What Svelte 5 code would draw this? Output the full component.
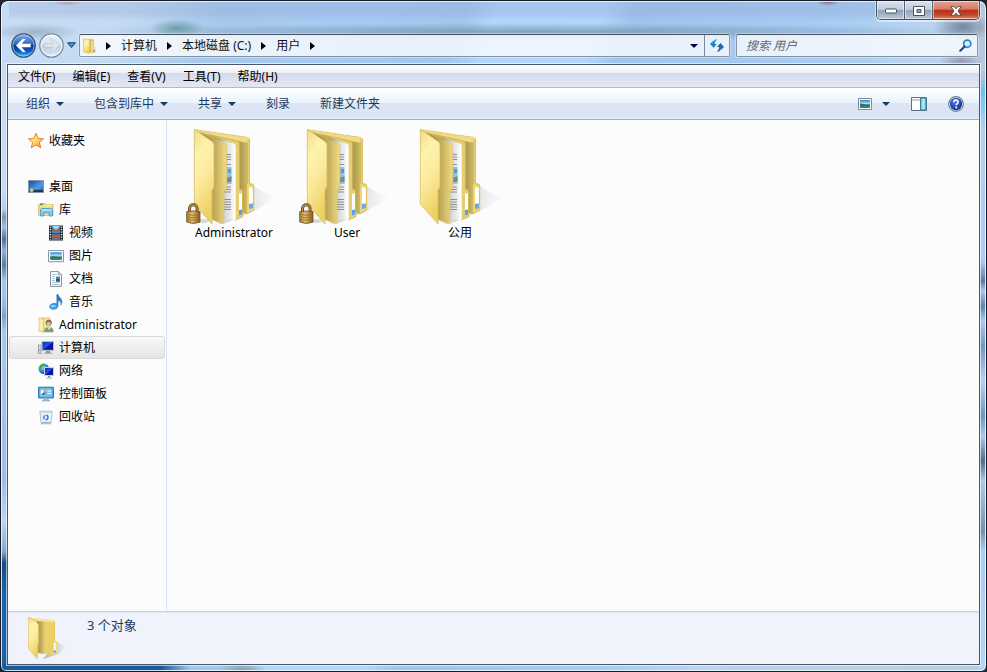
<script>
  const menus = ['文件(F)', '编辑(E)', '查看(V)', '工具(T)', '帮助(H)'];
  const crumbs = ['计算机', '本地磁盘 (C:)', '用户'];
  const commands = [
    { label: '组织', drop: true },
    { label: '包含到库中', drop: true },
    { label: '共享', drop: true },
    { label: '刻录' },
    { label: '新建文件夹' }
  ];
  const tree = [
    { label: '收藏夹', icon: 'star', level: 0, section: true },
    { label: '桌面', icon: 'desktop', level: 0 },
    { label: '库', icon: 'library', level: 1 },
    { label: '视频', icon: 'video', level: 2 },
    { label: '图片', icon: 'picture', level: 2 },
    { label: '文档', icon: 'document', level: 2 },
    { label: '音乐', icon: 'music', level: 2 },
    { label: 'Administrator', icon: 'user', level: 1 },
    { label: '计算机', icon: 'computer', level: 1 },
    { label: '网络', icon: 'network', level: 1 },
    { label: '控制面板', icon: 'control', level: 1 },
    { label: '回收站', icon: 'bin', level: 1 }
  ];
  const folders = [
    { name: 'Administrator', locked: true },
    { name: 'User', locked: true },
    { name: '公用', locked: false }
  ];
  let selected = $state(8);
  let query = $state('');
</script>

<svg class="defs" width="0" height="0" aria-hidden="true">
  <defs>
    <linearGradient id="gFront" x1="0" y1="0" x2="0.3" y2="1">
      <stop offset="0" stop-color="#efdb86" /><stop offset=".3" stop-color="#fdf3ae" /><stop offset=".6" stop-color="#fbea9c" /><stop offset="1" stop-color="#efd062" />
    </linearGradient>
    <linearGradient id="gMid" x1="0" y1="0" x2="1" y2="0">
      <stop offset="0" stop-color="#a08b42" /><stop offset=".45" stop-color="#b7a04f" /><stop offset="1" stop-color="#f0dc84" />
    </linearGradient>
    <linearGradient id="gBack" x1="0" y1="0" x2="1" y2="0">
      <stop offset="0" stop-color="#c8b35f" /><stop offset=".75" stop-color="#a89448" /><stop offset="1" stop-color="#efd97d" />
    </linearGradient>
    <linearGradient id="gPaper" x1="0" y1="0" x2="1" y2="0">
      <stop offset=".1" stop-color="#8f8f90" /><stop offset=".45" stop-color="#d2d2d4" /><stop offset="1" stop-color="#fff" />
    </linearGradient>
    <linearGradient id="gShadow" x1="0" y1="0" x2="1" y2="0">
      <stop offset="0" stop-color="#8a8a8a" stop-opacity=".6" /><stop offset=".6" stop-color="#aaa" stop-opacity=".45" /><stop offset="1" stop-color="#ccc" stop-opacity=".1" />
    </linearGradient>
    <linearGradient id="gLock" x1="0" y1="0" x2="1" y2="0">
      <stop offset="0" stop-color="#a9803a" /><stop offset=".4" stop-color="#e0bd6b" /><stop offset="1" stop-color="#8a6020" />
    </linearGradient>
    <linearGradient id="gSky" x1="0" y1="0" x2="0" y2="1">
      <stop offset="0" stop-color="#2f83cc" /><stop offset=".5" stop-color="#bfe9f7" /><stop offset=".6" stop-color="#3b8f7c" /><stop offset="1" stop-color="#2f77a4" />
    </linearGradient>
    <linearGradient id="gScreen" x1="0" y1="0" x2="1" y2="1">
      <stop offset="0" stop-color="#0d1f9c" /><stop offset=".48" stop-color="#2257e0" /><stop offset=".52" stop-color="#0718a8" /><stop offset="1" stop-color="#0a1690" />
    </linearGradient>
    <linearGradient id="gDesk" x1="0" y1="0" x2="1" y2="1">
      <stop offset="0" stop-color="#14459c" /><stop offset=".6" stop-color="#4f9be4" /><stop offset="1" stop-color="#2763b8" />
    </linearGradient>
    <linearGradient id="gStar" x1="0" y1="0" x2="1" y2="1">
      <stop offset="0" stop-color="#ffa82c" /><stop offset=".4" stop-color="#ffe680" /><stop offset="1" stop-color="#f28a1c" />
    </linearGradient>
    <linearGradient id="gNote" x1="0" y1="0" x2="0" y2="1">
      <stop offset="0" stop-color="#1b62b8" /><stop offset="1" stop-color="#3fa9ea" />
    </linearGradient>
    <linearGradient id="gBall" x1="0" y1="0" x2="0" y2="1">
      <stop offset="0" stop-color="#8fb6e8" /><stop offset=".45" stop-color="#2a62bd" /><stop offset=".5" stop-color="#0b3a98" /><stop offset=".75" stop-color="#0f58bf" /><stop offset="1" stop-color="#45d3fb" />
    </linearGradient>
    <linearGradient id="gPale" x1="0" y1="0" x2="0" y2="1">
      <stop offset="0" stop-color="#eef4fa" /><stop offset=".48" stop-color="#d3dfeb" /><stop offset=".52" stop-color="#bccddd" /><stop offset="1" stop-color="#e2edf6" />
    </linearGradient>
    <linearGradient id="gRefresh" x1="0" y1="0" x2="0" y2="1">
      <stop offset="0" stop-color="#2cb4dd" /><stop offset="1" stop-color="#2468b4" />
    </linearGradient>
    <radialGradient id="gGlobe" cx=".35" cy=".3" r=".8">
      <stop offset="0" stop-color="#bdeaff" /><stop offset=".5" stop-color="#2f8fe0" /><stop offset="1" stop-color="#0d3d94" />
    </radialGradient>
    <radialGradient id="gHelp" cx=".4" cy=".3" r=".8">
      <stop offset="0" stop-color="#4c7fe8" /><stop offset="1" stop-color="#0a248e" />
    </radialGradient>
  </defs>
</svg>

{#snippet smallFolder()}
  <svg width="16" height="16" viewBox="0 0 16 16" aria-hidden="true">
    <path d="M6 1.200l5.500.6v12.600H6z" fill="#d9bd5c" stroke="#dcb957" stroke-width=".6" />
    <path d="M9 3h2v11H9z" fill="#f1dc86" />
    <path d="M1.500.8L7.500 2v13.500L1.500 14z" fill="url(#gFront)" stroke="#dcbc5c" stroke-width=".6" />
    <path d="M11 9h2v5.500h-2z" fill="#f7f1d8" stroke="#d9b959" stroke-width=".5" />
    <path d="M11.400 11.500h1.400v2.400h-1.400z" fill="#4c9df0" />
  </svg>
{/snippet}

{#snippet treeIcon(name)}
  <svg width="16" height="16" viewBox="0 0 16 16" aria-hidden="true">
    {#if name === 'star'}
      <path d="M8 .4l2.200 5 5.300.4-4.200 3.500 1.500 5.500L8 11.900l-4.800 2.900 1.500-5.500L.5 5.800l5.300-.4z" fill="url(#gStar)" stroke="#e07c28" stroke-width=".9" stroke-linejoin="round" />
    {:else if name === 'desktop'}
      <path d="M.5 1.500h15v12H.5z" fill="url(#gDesk)" stroke="#8795a8" />
      <path d="M1 10.800h14V13H1z" fill="#25374b" />
      <circle cx="3.600" cy="11.200" r="1.900" fill="#6fd2f2" /><path d="M3.600 9.500v3.400M1.900 11.200h3.400" stroke="#f0c02e" stroke-width=".8" />
    {:else if name === 'library'}
      <path d="M.6 3L2 1.500h4.800l1.200 1h7v10.800H.6z" fill="#f3de8a" stroke="#d0ad4e" stroke-width=".8" />
      <path d="M2 2.400h3" stroke="#3ea64d" stroke-width="1.400" /><path d="M8 3.200h6" stroke="#fff8cf" />
      <path d="M2.500 8l1-1.500h10l1 1.500v6h-3.300v-3.300H5.800V14H2.500z" fill="#7fcaf2" stroke="#4192c7" stroke-width=".8" /><path d="M3.500 7.900h10" stroke="#d9f5ff" />
    {:else if name === 'video'}
      <path d="M1 .5h14v15H1z" fill="#222b33" /><path d="M4 1h8v14H4z" fill="#377db2" />
      <path d="M4 1h8L9 5l3 3H4l3-3z" fill="#9edaf0" /><path d="M5 3l3 2 3-2-1 4H6zM4 10l4 1 4-2v3l-3 2-5-1z" fill="#b5583c" /><path d="M4 8h8" stroke="#20303c" />
      <path d="M2.500 1.500v13M13.500 1.500v13" stroke="#e9eef2" stroke-width="1.500" stroke-dasharray="1.200 1.300" />
    {:else if name === 'picture'}
      <path d="M.5 2.500h15v11.200H.5z" fill="#fff" stroke="#8a97a3" /><path d="M2.200 4.200h11.600v7.800H2.200z" fill="url(#gSky)" /><path d="M2.200 8.800c2-1.600 5 .4 11.600 0v1.400H2.200z" fill="#2a7851" />
    {:else if name === 'document'}
      <path d="M2.500.6h8l3 3v11.800h-11z" fill="#fff" stroke="#84909b" /><path d="M10.300.8v3h3" fill="#dce3ea" stroke="#84909b" stroke-width=".8" />
      <path d="M4 3.500h5M4 5.500h3M4 7.500h3M4 9.500h3M4 11.500h8M4 13.500h8" stroke="#9fb0c0" stroke-width=".8" /><path d="M8 5.500h4v5H8z" fill="#3a8bd2" /><path d="M8 8.500l2-1.200 2 1.700v1.500H8z" fill="#2c5b53" />
    {:else if name === 'music'}
      <path d="M8.800.4h1.300c.4 3 4.600 3.800 3.800 8.600-.1 1-.5 1.700-1.100 2.300.5-2.500-.4-4.300-2.600-4.800v5.300c0 2.200-2 3.700-4.700 3.700-2.300 0-4-1.100-4-2.700 0-2 2.400-3.500 5-3.500.9 0 1.600.1 2.300.4z" fill="url(#gNote)" stroke="#2472b8" stroke-width=".4" /><ellipse cx="5.200" cy="12" rx="2.600" ry="1.300" fill="#7fd2f7" />
    {:else if name === 'user'}
      <path d="M1 1l5-.5V15l-5-1z" fill="#dfc265" /><path d="M5 1h7v13.500H5z" fill="#f4e19a" stroke="#cfae52" stroke-width=".6" /><path d="M1 .6L5.400 2v13.400L1 14z" fill="#fbefae" stroke="#d7b75c" stroke-width=".6" />
      <circle cx="10.800" cy="5.800" r="3" fill="#7a6a5a" /><circle cx="10.800" cy="6.900" r="2.100" fill="#e0b593" /><path d="M6 15.300c0-3.600 2-5.300 5-5.300s4.600 1.700 4.600 5.300z" fill="#7c9f74" /><path d="M9 10.300l2 2.500 2-2.500z" fill="#e7edf2" />
    {:else if name === 'computer'}
      <path d="M.5 5h2.600v8.500H.5z" fill="#dce0e3" stroke="#858c92" stroke-width=".8" /><path d="M1.100 10h1.400" stroke="#3bb14a" /><path d="M4 1.500h11.500v8.800H4z" fill="url(#gScreen)" stroke="#b6bec8" /><path d="M8 11h4l.8 2H7.200z" fill="#8f99a5" /><path d="M5.500 13.500h9" stroke="#aab3bd" />
    {:else if name === 'network'}
      <circle cx="5.800" cy="5.800" r="5.300" fill="url(#gGlobe)" /><path d="M2 2.500c2-2 4-2 5-1.300L6 3.500 4 4 3.500 7 1 6zM6 6l3-2 1.500 2-3 4.500L5 8z" fill="#43ad42" />
      <path d="M6.500 4.500h9v8h-9z" fill="url(#gScreen)" stroke="#cbd3dc" /><path d="M10 13h2v1.400h-2z" fill="#7c8894" /><path d="M8 15h6" stroke="#a1abb7" />
    {:else if name === 'control'}
      <path d="M.6 1.200h14.800v10.800H.6z" fill="#57aee2" stroke="#2d78ae" /><path d="M2 2.700h12v7.900H2z" fill="#7cc3ec" /><circle cx="5.400" cy="6.500" r="2.700" fill="#fff" /><path d="M5.400 6.500V3.800a2.700 2.700 0 012.700 2.700z" fill="#f19e2e" /><path d="M5.400 6.500h2.700a2.700 2.700 0 01-4.700 1.700z" fill="#2476b8" />
      <path d="M9.500 5h3.500M9.500 7.500h3.500" stroke="#fff" stroke-width="1.200" /><path d="M6 12.500h4l1 1.800H5z" fill="#a9b7c4" /><path d="M4 14.800h8" stroke="#8797a6" />
    {:else}
      <path d="M1.800 2.200h12.400l-1.400 12.600H3.200z" fill="#e7f0f6" stroke="#a5b3bf" stroke-width=".8" /><path d="M1.800 2.200h12.400l-.2 1.600H2z" fill="#c4d0da" /><path d="M12.300 4.500l-1 9.500" stroke="#fff" /><path d="M3.600 13.800h8.900" stroke="#8d99a5" />
      <circle cx="7.900" cy="8.400" r="2.100" fill="none" stroke="#3184db" stroke-width="1.500" stroke-dasharray="3.400 1" />
    {/if}
  </svg>
{/snippet}

<div class="window">
  <div class="titlebar">
    <div class="caption">
      <button class="cap" aria-label="最小化"><svg width="12" height="6" viewBox="0 0 12 6"><rect x=".5" y="1" width="11" height="4" rx=".5" fill="#fff" stroke="#4a5460" /></svg></button>
      <button class="cap" aria-label="最大化"><svg width="12" height="10" viewBox="0 0 12 10"><path d="M.5.500h11v9H.5zM4 3.500v3h4v-3z" fill="#fff" fill-rule="evenodd" stroke="#4a5460" /></svg></button>
      <button class="cap close" aria-label="关闭"><svg width="12" height="10" viewBox="0 0 12 10"><path d="M.8.600h3.300L6 2.800 7.900.6h3.300L8 5l3.200 4.400H7.900L6 7.200 4.100 9.400H.8L4 5z" fill="#fff" stroke="#5b4444" stroke-width=".9" /></svg></button>
    </div>
  </div>

  <nav class="navrow">
    <button class="plain" aria-label="后退">
      <svg width="25" height="25" viewBox="0 0 25 25"><circle cx="12.500" cy="12.500" r="11.700" fill="url(#gBall)" stroke="#33506f" stroke-width="1.200" /><circle cx="12.500" cy="12.500" r="10.600" fill="none" stroke="#bfe0fa" stroke-opacity=".6" /><path d="M5 12.500l6.500-6.500h3.200l-4 4.700h9v3.600h-9l4 4.700h-3.200z" fill="#fff" /></svg>
    </button>
    <button class="plain" aria-label="前进">
      <svg width="25" height="25" viewBox="0 0 25 25"><circle cx="12.500" cy="12.500" r="11.700" fill="url(#gPale)" stroke="#71879e" stroke-width="1.200" /><circle cx="12.500" cy="12.500" r="10.500" fill="none" stroke="#fff" stroke-opacity=".8" /><path d="M20 12.500L13.500 6h-3.200l4 4.700h-9v3.600h9l-4 4.700h3.200z" fill="#dce6ee" stroke="#adbdcc" stroke-width=".5" /></svg>
    </button>
    <button class="plain" aria-label="最近的页面"><svg width="9" height="7" viewBox="0 0 9 7"><path d="M.6.800h7.800L4.500 5.600z" fill="#3a9edc" stroke="#123c66" /></svg></button>
    <div class="address">
      {@render smallFolder()}
      <svg class="sep first" width="5" height="8" viewBox="0 0 5 8" aria-hidden="true"><path d="M0 0l5 4-5 4z" /></svg>
      {#each crumbs as crumb}
        <button class="crumb">{crumb}</button>
        <svg class="sep" width="5" height="8" viewBox="0 0 5 8" aria-hidden="true"><path d="M0 0l5 4-5 4z" /></svg>
      {/each}
      <span class="grow"></span>
      <button class="history" aria-label="以前的位置"><svg width="8" height="4" viewBox="0 0 8 4"><path d="M0 0h8L4 4z" fill="#00004a" /></svg></button>
      <button class="refresh" aria-label="刷新">
        <svg width="14" height="13" viewBox="0 0 14 13"><path d="M0 5L3.300 1.600v1.900C3.300 1.500 4.300.3 6.400 0v1.600C5.300 2 5 3.200 5 5h1.800L3.700 8.700z" fill="url(#gRefresh)" /><path d="M14 8l-3.300 3.200V9.300c0 2-1 3.300-3.100 3.700v-1.600C8.700 11 9 9.800 9 8H7l3.500-4z" fill="#2468b4" /></svg>
      </button>
    </div>
    <label class="search">
      <input type="text" placeholder="搜索 用户" aria-label="搜索 用户" bind:value={query} />
      <svg width="13" height="13" viewBox="0 0 13 13" aria-hidden="true"><circle cx="8.200" cy="4.700" r="3.600" fill="#d9f0fc" stroke="#2f83c9" stroke-width="1.700" /><path d="M5.600 7.500L1.300 11.700" stroke="#1c4690" stroke-width="2.200" stroke-linecap="round" /></svg>
    </label>
  </nav>

  <div class="client">
    <div class="menubar">
      {#each menus as menu}<button>{menu}</button>{/each}
    </div>
    <div class="toolbar">
      {#each commands as cmd}
        <button>{cmd.label}{#if cmd.drop}<svg width="8" height="4" viewBox="0 0 8 4" aria-hidden="true"><path d="M0 0h8L4 4z" fill="#1e395b" /></svg>{/if}</button>
      {/each}
      <span class="grow"></span>
      <div class="tools">
        <button class="view" aria-label="更改您的视图">
          <svg width="14" height="12" viewBox="0 0 14 12"><path d="M.5.500h13v11H.5z" fill="#fff" stroke="#7e8b99" /><path d="M2 2h10v8H2z" fill="url(#gSky)" /><path d="M2 5.500c3 0 5 1.500 10 1v1.500H2z" fill="#2b7a4b" /></svg>
          <svg width="8" height="4" viewBox="0 0 8 4"><path d="M0 0h8L4 4z" fill="#1e395b" /></svg>
        </button>
        <button aria-label="显示预览窗格"><svg width="16" height="14" viewBox="0 0 16 14"><path d="M.5.500h15v13H.5z" fill="#fff" stroke="#557186" /><path d="M1 3h9" stroke="#8fa2b3" /><path d="M9.500 1H15v12H9.500z" fill="#79cfdf" stroke="#3c7f99" /><path d="M12.500 2v10" stroke="#b9edf5" stroke-width="2" /></svg></button>
        <button class="help" aria-label="获取帮助"><svg width="16" height="16" viewBox="0 0 16 16"><circle cx="8" cy="8" r="7.400" fill="#e9edf2" stroke="#767e88" stroke-width="1.100" /><circle cx="8" cy="8" r="6.200" fill="url(#gHelp)" /><path d="M5.900 6.300c0-3 4.400-2.900 4.300-.3C10.200 7.500 8.200 7.600 8.200 9.200" fill="none" stroke="#fff" stroke-width="1.600" /><circle cx="8.200" cy="11.400" r="1" fill="#fff" /></svg></button>
      </div>
    </div>

    <div class="body">
      <aside>
        {#each tree as item, i}
          <button class="node level{item.level}" class:section={item.section} class:selected={selected === i} onclick={() => (selected = i)}>
            {@render treeIcon(item.icon)}<span>{item.label}</span>
          </button>
        {/each}
      </aside>
      <main>
        {#each folders as folder}
          <button class="tile">
            <svg width="100" height="98" viewBox="0 -1 100 98" aria-hidden="true">
              <path d="M68 58l13 8 10 4.500-8 6-14 8-28 12h-6z" fill="url(#gShadow)" opacity=".6" />
              <path d="M10.500 2.500L63 10.200q2.700.5 2.700 3.300V56l3 .6q1.300.4 1.300 1.600V83.500L63 87l-8-2V22L12 5z" fill="url(#gBack)" />
              <path d="M10.500 2.500L63 10.200q2.700.5 2.700 3.300V16l-10-1.500L14 5z" fill="#f0db85" stroke="#dcc36a" stroke-width=".5" />
              <path d="M65.500 13v44l4.200 1.400V83l-7 4V58l1.200-2.500V13z" fill="#efd878" stroke="#cdb04e" stroke-width=".6" />
              <path d="M65 60.500h3.800V78l-3.800 1.500z" fill="#fff" /><path d="M65 77l3.800-.7V81l-3.800 1.300z" fill="#68a6f2" />
              <path d="M26 8l28 6.500q1.600.6 1.600 2.500V62l2 .6q1.100.5 1.100 1.600V90L51 93V18z" fill="#e6cf72" stroke="#c8ae51" stroke-width=".7" />
              <path d="M55 66.500h3V83l-3 1z" fill="#fff" /><path d="M55 83l3-.5V87.500l-3 1z" fill="#5b9cf0" />
              <path d="M30 11l20 5.500q1.500.6 1.600 2V93L38 92V20z" fill="url(#gPaper)" />
              <path d="M40 27.500h7M40 30h7M40 32.500h7M40 37.500h7M40 60h7M40 62.500h7M40 65h7M40 72.500h7M40 75h7M40 77.500h7M40 80h7M40 82.500h7" stroke="#82868b" stroke-width=".9" />
              <path d="M42 40h5.500v17H42z" fill="#a9bccb" /><path d="M44 42h3v4h-3z" fill="#4aa0d4" /><path d="M43 51l4.500-2v6H43z" fill="#6a8f96" />
              <path d="M50.500 20v72" stroke="#fff" stroke-width="1.500" />
              <path d="M16 5l24 11q2.700 1.300 2.700 3.500V61l-2.500 3-.4 32.500-4-.5L27 92V17z" fill="url(#gMid)" stroke="#d8c06a" stroke-width=".6" />
              <path d="M10.300 2.300L28 14.500q2 1.400 2 3.600V60l-2 3v34L10.300 77z" fill="url(#gFront)" stroke="#d9bd61" stroke-width=".8" />
              {#if folder.locked}
                <ellipse cx="18" cy="94" rx="7" ry="2" fill="#999" opacity=".35" />
                <path d="M5.500 86v-4c0-5.600 7.600-5.600 7.600 0v4" fill="none" stroke="#5e431a" stroke-width="3" /><path d="M5.500 86v-4c0-5.600 7.600-5.600 7.600 0v4" fill="none" stroke="#c19b4c" stroke-width="1.200" />
                <path d="M2.700 84.700q6.800-1.600 13.300 0V95q-6.500 3-13.300 0z" fill="url(#gLock)" stroke="#6c4a18" stroke-width=".8" />
                <path d="M3 87.500q6.500 1.500 12.800 0M3 90q6.500 1.500 12.800 0M3 92.500q6.500 1.500 12.800 0" fill="none" stroke="#8a6428" stroke-width=".7" />
              {/if}
            </svg>
            <span>{folder.name}</span>
          </button>
        {/each}
      </main>
    </div>

    <footer>
      <svg width="40" height="46" viewBox="0 0 40 46" aria-hidden="true">
        <path d="M30 27l9 5-7 7-16 5z" fill="url(#gShadow)" />
        <path d="M2 2.500l25 3q1 .3 1 1.500V26l2 1v11l-4 2-15-2z" fill="#e8cb60" />
        <path d="M10 5l9 1v33l-8-1z" fill="url(#gMid)" opacity=".8" /><path d="M18 5l9 1v33l-9-.5z" fill="#ecd067" /><path d="M2 2.500l25 3v2L10 6z" fill="#f5e59a" />
        <path d="M27 26l3 1v11l-4 2V27z" fill="#f1da7d" /><path d="M27 28h1.500v8H27z" fill="#fff" /><circle cx="27.800" cy="36.500" r="1.300" fill="#5ba3f2" />
        <path d="M1.500 2L10 8q1.500 1 1.500 2.500V29l-1 1.500V44L1.500 34z" fill="url(#gFront)" stroke="#dfc368" stroke-width=".6" />
      </svg>
      <span>3 个对象</span>
    </footer>
  </div>
</div>

<style>
  :global(body) { margin: 0; background: #20242c; }
  .defs { position: absolute; }
  .window, button, input { font-family: 'Noto Sans', 'Noto Sans CJK SC', sans-serif; font-size: 12px; }
  .window {
    box-sizing: border-box;
    display: flex;
    flex-direction: column;
    min-height: 100vh;
    padding: 0 6px 6px;
    border: 1px solid #181a25;
    border-radius: 8px 8px 6px 6px;
    box-shadow: inset 0 0 0 1px rgba(240, 250, 255, .85);
    background:
      radial-gradient(ellipse 28px 9px at 176px 27px, rgba(63, 128, 122, .6), transparent),
      radial-gradient(ellipse 46px 9px at 34px 31px, rgba(100, 118, 140, .4), transparent),
      radial-gradient(ellipse 16px 5px at 66px 0, rgba(190, 80, 90, .5), transparent),
      radial-gradient(ellipse 12px 5px at 827px 0, rgba(120, 50, 80, .7), transparent),
      radial-gradient(ellipse 30px 14px at 962px 26px, rgba(88, 100, 122, .7), transparent),
      radial-gradient(ellipse 22px 12px at 960px 60px, rgba(128, 120, 140, .6), transparent),
      radial-gradient(ellipse 24px 10px at 242px 100%, rgba(125, 145, 130, .8), transparent),
      linear-gradient(to right, #1a5b9c 160px, transparent 190px) 0 100% / 100% 8px no-repeat,
      linear-gradient(#c5daf4 0 190px, #b5cff0 208px, #8099a4 216px, #9dbde6 226px, #566d96 238px, #8db3de 250px, #55809e 264px, #a5c7ef 280px, #9cbfe9 300px, #7fa2cc 315px, #a5c8f0 330px, #9dbdea 480px, #bcd6f2 520px, #88a8d2 550px, #174a80 562px, #1b62a4 590px) 0 0 / 8px 100% no-repeat,
      linear-gradient(#b8c8dd 0 70px, #74bdf2 90px, #b0d3f4 130px, #a9cef4 260px, #587ca7 280px, #a7cbf1 290px, #5c84b1 305px, #a9cef6 320px, #7197c4 345px, #b1d4f6 380px, #6c98be 415px, #a5ccf0 435px, #536c8c 460px, #a7ceef 480px, #7394b4 530px, #a7cff3 550px, #b3d6fa) 100% 0 / 8px 100% no-repeat,
      radial-gradient(ellipse 460px 9px at 530px 31px, rgba(100, 128, 145, .6), transparent),
      linear-gradient(to bottom, rgba(130, 155, 200, .25) 0 12px, transparent 20px),
      linear-gradient(110deg, #c8dcf4 0, #c4daf3 120px, #a8c8ec 210px, #a6cbf3 330px, #a2c7ee 440px, #b1d6fd 470px, #b1d5fc 570px, #a0c5ed 600px, #a8ccf3 800px, #b9d4f0 880px, #bacde2 100%);
  }
  button { padding: 0; border: 0; background: none; color: inherit; line-height: 16px; }
  button:focus-visible { outline: 1px dotted #345; }
  svg { display: block; flex: none; }
  .grow { flex: 1; }
  .titlebar { display: flex; justify-content: flex-end; height: 33px; }
  .caption {
    display: flex;
    height: 18px;
    border: 1px solid #48515e;
    border-top: 0;
    border-radius: 0 0 5px 5px;
    overflow: hidden;
    box-shadow: 0 1px 0 1px rgba(255, 255, 255, .5);
  }
  .cap {
    box-sizing: border-box;
    display: flex;
    align-items: center;
    justify-content: center;
    width: 28px;
    padding-top: 1px;
    border-right: 1px solid #56606e;
    background: linear-gradient(#dbe4ee, #bccada 48%, #91a3b8 52%, #b8c8da);
    box-shadow: inset 0 0 0 1px rgba(255, 255, 255, .5);
  }
  .close {
    width: 46px;
    border-right: 0;
    background: linear-gradient(#e6a493, #d67b67 45%, #b92f19 52%, #c54a2b 80%, #df8f62);
  }
  .navrow { display: flex; align-items: center; gap: 3px; height: 23px; padding: 0 2px 7px 4px; }
  .plain { display: flex; }
  .address, .search {
    box-sizing: border-box;
    display: flex;
    align-items: center;
    height: 23px;
    border: 1px solid #8495a6;
    border-top-color: #46525f;
    border-radius: 2px;
    background: rgba(255, 255, 255, .76);
    box-shadow: 0 0 0 1px rgba(255, 255, 255, .35);
  }
  .address { flex: 1; min-width: 0; padding-left: 2px; }
  .sep { fill: #000; margin: 0 10px; }
  .first { margin-left: 8px; }
  .crumb { white-space: nowrap; color: #111; }
  .history, .refresh { display: flex; align-items: center; justify-content: center; align-self: stretch; width: 20px; }
  .refresh { width: 25px; border-left: 1px solid #77899b; }
  .search { flex: 0 1 242px; min-width: 0; margin-left: 3px; padding: 0 5px 0 9px; }
  .search input { flex: 1; min-width: 0; padding: 0; border: 0; outline: 0; background: none; color: #222; }
  .search input::placeholder { color: #626a72; font-style: italic; opacity: 1; }
  .client {
    flex: 1;
    display: flex;
    flex-direction: column;
    border: 1px solid #48596c;
    box-shadow: 0 0 0 1px rgba(255, 255, 255, .6);
    background: #fcfcfc;
  }
  .menubar {
    box-sizing: border-box;
    display: flex;
    align-items: center;
    gap: 17px;
    height: 23px;
    padding: 2px 0 0 10px;
    border-bottom: 1px solid #b4bacd;
    background: linear-gradient(#fff, #edf0f7 34%, #d5daec 36%, #e3e7f5);
    color: #000;
  }
  .toolbar {
    display: flex;
    align-items: center;
    gap: 30px;
    height: 31px;
    padding: 0 15px 0 18px;
    border-bottom: 1px solid #a0afc3;
    background: linear-gradient(#fff, #e9f3fd 48%, #dce6f4 50%, #dae5f3 92%, #e6eef8);
    color: #1e395b;
  }
  .toolbar button { display: flex; align-items: center; gap: 6px; white-space: nowrap; }
  .tools { display: flex; align-items: center; gap: 21px; }
  .toolbar .view { gap: 10px; }
  .body { flex: 1; display: flex; }
  aside { box-sizing: border-box; flex: 0 0 159px; display: flex; flex-direction: column; padding: 9px 1px; border-right: 1px solid #d6e5f5; }
  .node {
    box-sizing: border-box;
    display: flex;
    align-items: center;
    gap: 5px;
    height: 23px;
    padding-left: 18px;
    border: 1px solid transparent;
    border-radius: 3px;
    color: #000;
    text-align: left;
    white-space: nowrap;
  }
  .section { margin-bottom: 23px; }
  .level1 { padding-left: 28px; }
  .level2 { padding-left: 38px; }
  .selected { border-color: #d9d9d9; background: linear-gradient(#f8f8f8, #e5e5e5); }
  main { flex: 1; display: flex; flex-wrap: wrap; align-content: flex-start; gap: 1px; padding: 6px 11px; }
  .tile { display: flex; flex-direction: column; align-items: center; width: 112px; line-height: 18px; color: #000; }
  footer {
    box-sizing: border-box;
    display: flex;
    gap: 20px;
    height: 53px;
    padding: 3px 19px 0;
    border-top: 1px solid #c5d3e3;
    background: #f0f3fb;
    box-shadow: inset 0 1px 1px #dde6f1;
    color: #1e395b;
    font-size: 13px;
    line-height: 20px;
  }
</style>
